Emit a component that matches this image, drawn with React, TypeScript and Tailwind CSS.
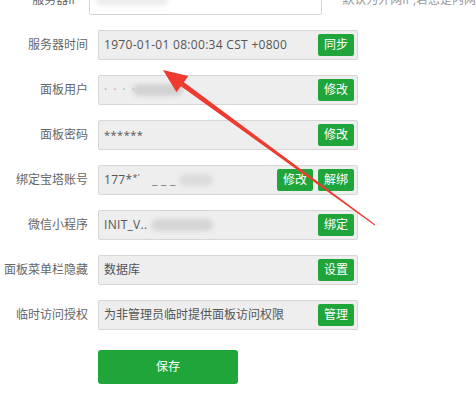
import React from "react";

type Row = {
  label: string;
  value: React.ReactNode;
  buttons: string[];
};

function Blur({ w, className = "" }: { w: number; className?: string }) {
  return (
    <span
      className={`inline-block h-[12px] rounded-full bg-[#d2d2d2] blur-[2px] align-middle ${className}`}
      style={{ width: w }}
    />
  );
}

const rows: Row[] = [
  {
    label: "服务器时间",
    value: <span className="tracking-[0.3px]">1970-01-01 08:00:34 CST +0800</span>,
    buttons: ["同步"]
  },
  {
    label: "面板用户",
    value: (
      <span className="flex items-center">
        <span className="text-[#aaa] tracking-[6px]">····</span>
        <Blur w={50} className="-ml-2" />
      </span>
    ),
    buttons: ["修改"]
  },
  { label: "面板密码", value: <span className="text-[11px] tracking-[0.5px]">******</span>, buttons: ["修改"] },
  {
    label: "绑定宝塔账号",
    value: (
      <span className="flex items-center tracking-[0.3px]">
        177*<span className="text-[9px] -mt-1">*'</span>
        <span className="ml-3 text-[#777]">_ _ _</span>
        <Blur w={34} className="ml-1 bg-[#dcdcdc]" />
      </span>
    ),
    buttons: ["修改", "解绑"]
  },
  {
    label: "微信小程序",
    value: (
      <span className="flex items-center tracking-[0.3px]">
        INIT_V..
        <Blur w={62} className="ml-1 bg-[#d6d6d6]" />
      </span>
    ),
    buttons: ["绑定"]
  },
  { label: "面板菜单栏隐藏", value: "数据库", buttons: ["设置"] },
  { label: "临时访问授权", value: "为非管理员临时提供面板访问权限", buttons: ["管理"] }
];

function GreenButton({ text }: { text: string }) {
  return (
    <button
      type="button"
      className="h-[22px] w-[36px] rounded-[2px] bg-[#20a53a] text-[12px] leading-[22px] text-white"
    >
      {text}
    </button>
  );
}

function FieldRow({ row }: { row: Row }) {
  return (
    <div className="mb-[15px] flex h-[30px] items-center">
      <div className="w-[88px] whitespace-nowrap text-right text-[12px] text-[#666]">{row.label}</div>
      <div className="ml-[10px] flex h-[30px] w-[260px] items-center rounded-[2px] border border-[#d6d6d6] bg-[#eeeeee] pl-[5px] pr-[3px]">
        <div className="flex-1 whitespace-nowrap text-[12px] text-[#555]">{row.value}</div>
        <div className="flex gap-[5px]">
          {row.buttons.map((b) => (
            <GreenButton key={b} text={b} />
          ))}
        </div>
      </div>
    </div>
  );
}

export default function App() {
  return (
    <div
      className="relative h-[394px] w-[476px] overflow-hidden bg-white"
      style={{ fontFamily: '"Open Sans", "Noto Sans CJK SC", sans-serif' }}
    >
      <div className="mt-[-15px]">
        {/* server ip row, cut off at the top */}
        <div className="mb-[15px] flex h-[30px] items-center">
          <div className="w-[88px] whitespace-nowrap text-right text-[12px] text-[#666]">服务器IP</div>
          <div className="ml-[10px] flex h-[30px] w-[260px] items-center rounded-[2px] border border-[#d6d6d6] bg-white pl-[6px]">
            <Blur w={72} className="bg-[#eeeeee]" />
          </div>
          <div className="ml-[20px] whitespace-nowrap text-[12px] text-[#999]">默认为外网IP,若您是内网</div>
        </div>

        {rows.map((row) => (
          <FieldRow key={row.label} row={row} />
        ))}

        <button
          type="button"
          className="ml-[98px] mt-[5px] h-[34px] w-[140px] rounded-[3px] bg-[#20a53a] text-[12px] text-white"
        >
          保存
        </button>
      </div>

      {/* red annotation arrow */}
      <svg className="pointer-events-none absolute left-0 top-0" width="476" height="394">
        <polygon
          points="163,70 188.3,76.1 183.9,82.2 375.3,224.6 374.7,225.4 180.9,86.2 176.5,92.3"
          fill="#ee3a2f"
        />
      </svg>
    </div>
  );
}
